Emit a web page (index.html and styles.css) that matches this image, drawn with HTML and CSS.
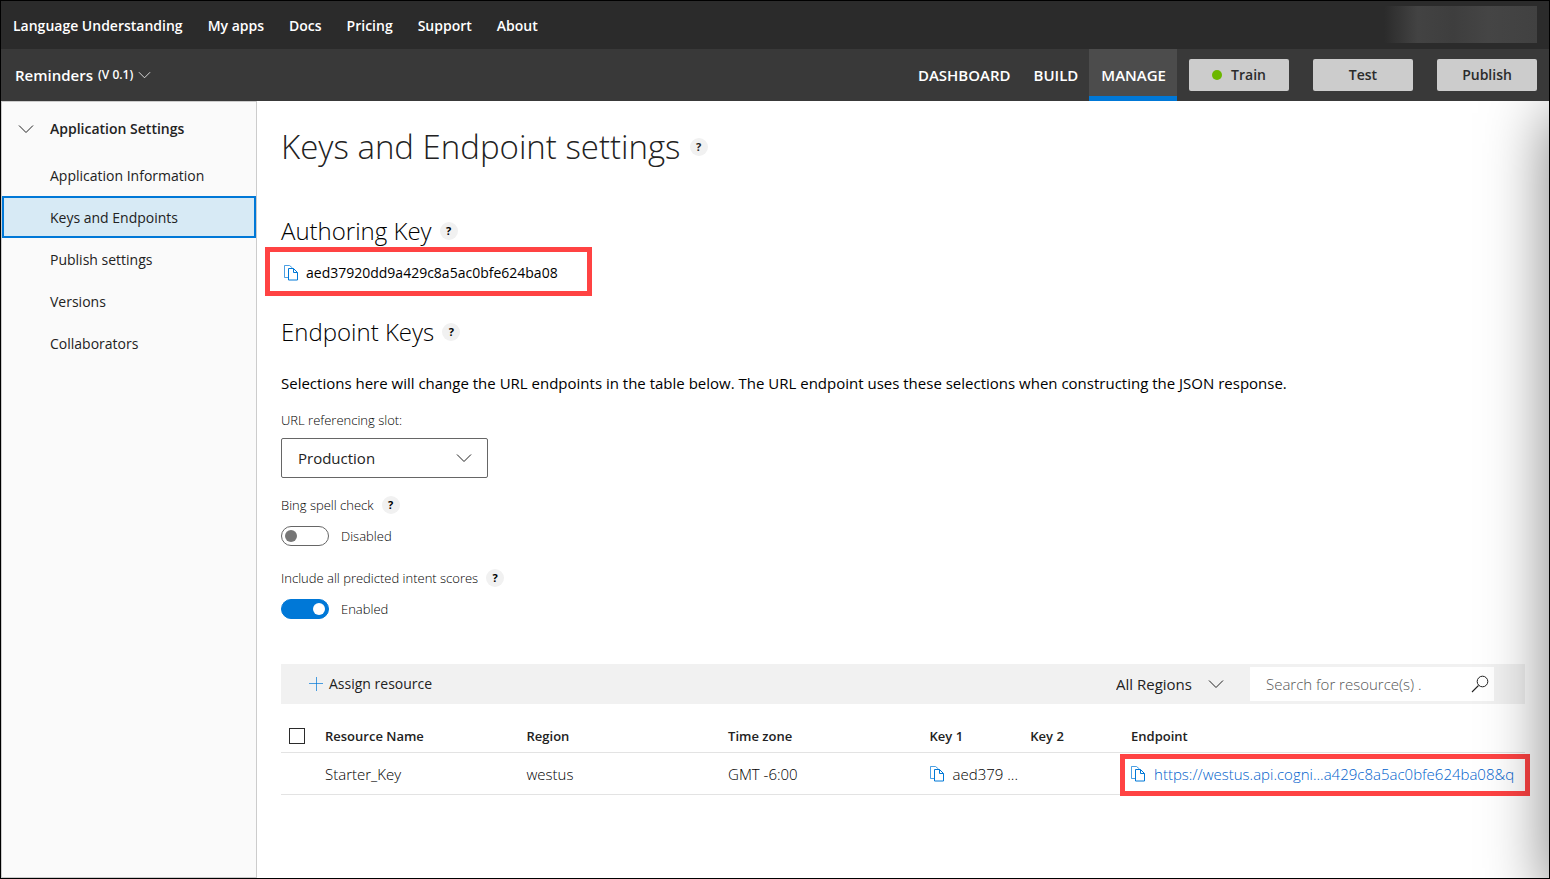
FILE: index.html
```html
<!DOCTYPE html>
<html lang="en">
<head>
<meta charset="utf-8">
<title>Language Understanding - Keys and Endpoint settings</title>
<link rel="stylesheet" href="styles.css">
</head>
<body>
<svg class="sprite" aria-hidden="true">
  <symbol id="chevron" viewBox="0 0 16 10"><path d="M1 1.500 8 8.500 15 1.500" fill="none" stroke="currentColor"/></symbol>
  <symbol id="copy" viewBox="0 0 14 16"><path d="M4 12.500H.500V.500h5l3 2.500" fill="none" stroke="currentColor" stroke-opacity=".7"/><path d="M4.500 3.500h5l4 4v7.500h-9zM9.500 3.500v4h4" fill="none" stroke="currentColor"/></symbol>
  <symbol id="search" viewBox="0 0 18 18"><path d="M7.500 10.500 1 17" fill="none" stroke="currentColor" stroke-width="1.100"/><circle cx="11.500" cy="6.500" r="5.300" fill="none" stroke="currentColor"/></symbol>
  <symbol id="plus" viewBox="0 0 14 14"><path d="M7.500 0v14M0 6.500h14" fill="none" stroke="currentColor" stroke-opacity=".7"/></symbol>
</svg>
<div class="app">
  <header>
    <nav class="topbar" aria-label="Site">
      <a href="#">Language Understanding</a>
      <a href="#">My apps</a>
      <a href="#">Docs</a>
      <a href="#">Pricing</a>
      <a href="#">Support</a>
      <a href="#">About</a>
      <span class="account"></span>
    </nav>
    <div class="appbar">
      <button class="app-name" type="button">Reminders <small>(V 0.1)</small><svg class="chevron-small"><use href="#chevron"/></svg></button>
      <nav class="tabs" aria-label="Application">
        <a href="#">DASHBOARD</a>
        <a href="#">BUILD</a>
        <a href="#" class="active" aria-current="page">MANAGE</a>
      </nav>
      <div class="actions">
        <button type="button"><span class="dot"></span>Train</button>
        <button type="button">Test</button>
        <button type="button">Publish</button>
      </div>
    </div>
  </header>
  <div class="body">
    <nav class="sidebar" aria-label="Settings">
      <button class="group" type="button"><svg class="chevron"><use href="#chevron"/></svg>Application Settings</button>
      <a href="#">Application Information</a>
      <a href="#" class="selected" aria-current="page">Keys and Endpoints</a>
      <a href="#">Publish settings</a>
      <a href="#">Versions</a>
      <a href="#">Collaborators</a>
    </nav>
    <main>
      <h1>Keys and Endpoint settings <button class="help" type="button">?</button></h1>
      <h2>Authoring Key <button class="help" type="button">?</button></h2>
      <div class="key-box">
        <button class="copy" type="button" aria-label="Copy"><svg><use href="#copy"/></svg></button>
        <span>aed37920dd9a429c8a5ac0bfe624ba08</span>
      </div>
      <h2 class="endpoint-title">Endpoint Keys <button class="help" type="button">?</button></h2>
      <p class="intro">Selections here will change the URL endpoints in the table below. The URL endpoint uses these selections when constructing the JSON response.</p>
      <label class="label" for="slot">URL referencing slot:</label>
      <div class="select slot">
        <select id="slot"><option>Production</option><option>Staging</option></select>
        <svg class="chevron"><use href="#chevron"/></svg>
      </div>
      <div class="setting">
        <div class="label-row"><label for="spell">Bing spell check</label><button class="help" type="button">?</button></div>
        <div class="toggle-row"><input class="toggle" id="spell" type="checkbox" role="switch"><span>Disabled</span></div>
      </div>
      <div class="setting">
        <div class="label-row"><label for="scores">Include all predicted intent scores</label><button class="help" type="button">?</button></div>
        <div class="toggle-row"><input class="toggle" id="scores" type="checkbox" role="switch" checked><span>Enabled</span></div>
      </div>
      <div class="toolbar">
        <button class="assign" type="button"><svg><use href="#plus"/></svg>Assign resource</button>
        <div class="select regions">
          <select aria-label="Region"><option>All Regions</option></select>
          <svg class="chevron"><use href="#chevron"/></svg>
        </div>
        <div class="search">
          <input type="text" placeholder="Search for resource(s) ." aria-label="Search for resources">
          <svg><use href="#search"/></svg>
        </div>
      </div>
      <table>
        <colgroup><col class="c-check"><col class="c-wide"><col class="c-wide"><col class="c-wide"><col class="c-key"><col class="c-key"><col></colgroup>
        <thead>
          <tr><th><input class="check" type="checkbox" aria-label="Select all"></th><th>Resource Name</th><th>Region</th><th>Time zone</th><th>Key 1</th><th>Key 2</th><th>Endpoint</th></tr>
        </thead>
        <tbody>
          <tr>
            <td></td><td>Starter_Key</td><td>westus</td><td>GMT -6:00</td>
            <td><div class="copyable"><button class="copy" type="button" aria-label="Copy"><svg><use href="#copy"/></svg></button><span>aed379 ...</span></div></td>
            <td></td>
            <td class="highlight"><div class="copyable"><button class="copy" type="button" aria-label="Copy"><svg><use href="#copy"/></svg></button><a href="#">https://westus.api.cogni...a429c8a5ac0bfe624ba08&amp;q</a></div></td>
          </tr>
        </tbody>
      </table>
      <div class="edge-shadow"></div>
    </main>
  </div>
</div>
</body>
</html>
```
FILE: styles.css
```css
* { box-sizing: border-box; }
body {
  margin: 0;
  font: 14px/20px "Open Sans", "Noto Sans", sans-serif;
  color: #222;
}
button, input, select { font: inherit; color: inherit; margin: 0; }
button { border: 0; padding: 0; background: none; cursor: pointer; }
a { color: inherit; text-decoration: none; }
svg { flex: none; }
.sprite { position: absolute; width: 0; height: 0; }

.app {
  min-height: 100vh;
  display: flex;
  flex-direction: column;
  border: 1px solid #000;
}

.topbar {
  display: flex;
  align-items: center;
  gap: 25px;
  height: 48px;
  padding: 2px 12px 0;
  background: #2b2b2b;
  color: #fff;
  font-weight: 600;
}
.account {
  width: 153px;
  height: 37px;
  margin: 0 0 4px auto;
  background: linear-gradient(90deg, #2b2b2b, #434343 22%, #3e3e3e 45%, #454545 68%, #414141);
}
.appbar {
  display: flex;
  align-items: center;
  height: 52px;
  padding: 0 12px 0 14px;
  background: #393939;
  color: #fff;
  font-size: 15px;
  font-weight: 600;
}
.app-name { display: flex; align-items: center; gap: 5px; font-weight: 600; }
.app-name small { font-size: 12px; }
.chevron-small { width: 13px; height: 8px; }
.tabs { display: flex; align-self: stretch; margin-left: auto; }
.tabs a {
  display: flex;
  align-items: center;
  padding: 5px 11px 0 12px;
  border-bottom: 5px solid transparent;
}
.tabs .active { background: #4c4c4c; border-color: #0078d7; }
.actions { display: flex; gap: 24px; margin-left: 12px; }
.actions button {
  display: flex;
  align-items: center;
  justify-content: center;
  gap: 9px;
  width: 100px;
  height: 32px;
  border-radius: 2px;
  background: #ccc;
  color: #2b2b2b;
  font-size: 14px;
  font-weight: 600;
}
.dot { width: 10px; height: 10px; border-radius: 50%; background: #6bb700; }

.body { display: flex; flex: 1; }
.sidebar {
  flex: none;
  display: flex;
  flex-direction: column;
  width: 256px;
  padding: 6px 0;
  border: 1px solid #ccc;
  background: #fafafa;
}
.sidebar a {
  display: flex;
  align-items: center;
  height: 42px;
  padding: 2px 0 0 46px;
  border: 2px solid transparent;
}
.sidebar .selected { background: #d7eaf5; border-color: #0078d7; }
.group {
  display: flex;
  align-items: center;
  gap: 16px;
  height: 42px;
  margin-bottom: 4px;
  padding-left: 16px;
  font-weight: 600;
}
.chevron { width: 16px; height: 10px; }

main {
  position: relative;
  flex: 1;
  min-width: 0;
  padding: 22px 24px 40px;
  overflow: hidden;
}
h1, h2 { display: flex; align-items: center; margin: 0; font-weight: 300; }
h1 { gap: 9px; font-size: 33px; line-height: 48px; }
h2 { gap: 8px; margin-top: 44px; font-size: 24px; line-height: 32px; color: #000; }
.endpoint-title { margin-top: 20px; }
.help {
  width: 18px;
  height: 18px;
  border-radius: 50%;
  background: #f1f1f1;
  font-size: 11px;
  line-height: 18px;
  font-weight: 700;
}
.key-box {
  display: flex;
  align-items: center;
  gap: 8px;
  width: 327px;
  height: 49px;
  margin-left: -16px;
  padding: 2px 14px 0;
  border: 5px solid #ff4343;
  color: #000;
}
.copy { display: flex; color: #0078d7; }
.copy svg { width: 14px; height: 16px; }
.intro { margin: 25px 0 19px; color: #000; font-size: 15px; }
.label { display: block; color: #000; font-size: 13px; line-height: 16px; font-weight: 300; }
.select { position: relative; display: flex; align-items: center; font-size: 15px; }
.select select {
  width: 100%;
  height: 100%;
  border: 0;
  background: none;
  appearance: none;
}
.select .chevron { position: absolute; right: 16px; pointer-events: none; }
.slot { width: 207px; height: 40px; margin-top: 10px; }
.slot select { padding: 0 16px; border: 1px solid #666; border-radius: 2px; }
.setting { margin-top: 18px; color: #000; font-size: 13px; font-weight: 300; }
.setting + .setting { margin-top: 23px; }
.label-row { display: flex; align-items: center; gap: 8px; height: 18px; }
.toggle-row { display: flex; align-items: center; gap: 12px; height: 20px; margin-top: 12px; }
.toggle {
  display: flex;
  align-items: center;
  width: 48px;
  height: 20px;
  padding: 0 3px;
  border: 1px solid #666;
  border-radius: 10px;
  background: #fff;
  appearance: none;
}
.toggle::before { content: ""; width: 12px; height: 12px; border-radius: 50%; background: #767676; }
.toggle:checked { justify-content: flex-end; border-color: #0078d7; background: #0078d7; }
.toggle:checked::before { background: #fff; }

.toolbar {
  display: flex;
  align-items: center;
  height: 40px;
  margin-top: 45px;
  padding: 0 31px 0 28px;
  background: #f1f1f1;
}
.assign { display: flex; align-items: center; gap: 6px; }
.assign svg { width: 14px; height: 14px; color: #0078d7; }
.regions { width: 122px; height: 32px; margin-left: auto; }
.regions .chevron { right: 14px; }
.regions select { padding: 0; }
.search {
  display: flex;
  align-items: center;
  width: 244px;
  height: 34px;
  margin-left: 12px;
  padding: 0 5px 0 16px;
  background: #fff;
  font-size: 15px;
  font-weight: 300;
}
.search input { flex: 1; min-width: 0; border: 0; padding: 0; background: none; outline: 0; }
.search input::placeholder { color: #555; opacity: 1; }
.search svg { width: 18px; height: 18px; }

table { width: 100%; margin-top: 16px; border-collapse: separate; border-spacing: 0; table-layout: fixed; }
th, td { padding: 0 8px; border-bottom: 1px solid #e3e3e3; text-align: left; white-space: nowrap; }
th { height: 33px; font-size: 13px; font-weight: 600; }
td { height: 42px; color: #000; font-size: 15px; font-weight: 300; }
.c-check { width: 36px; }
.c-wide { width: 16.2%; }
.c-key { width: 8.1%; }
.check {
  display: block;
  width: 16px;
  height: 16px;
  border: 1px solid #2b2b2b;
  background: #fff;
  appearance: none;
}
.copyable { display: flex; align-items: center; gap: 9px; }
.copyable a { color: #005fcc; }
.highlight { position: relative; }
.highlight::after {
  content: "";
  position: absolute;
  inset: 1px -5px -2px -3px;
  border: 5px solid #ff4343;
  pointer-events: none;
}
.edge-shadow {
  position: absolute;
  top: 12px;
  right: -100px;
  bottom: -20px;
  width: 100px;
  box-shadow: 0 0 64px rgba(0, 0, 0, 0.5);
  pointer-events: none;
}
```
